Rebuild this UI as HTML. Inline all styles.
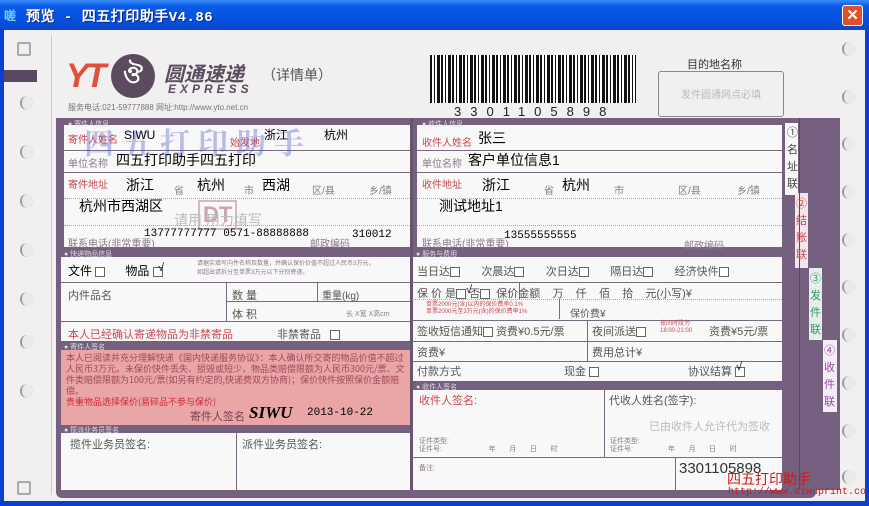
<!DOCTYPE html><html><head><meta charset="utf-8"><style>
*{margin:0;padding:0;box-sizing:border-box}
body{width:869px;height:506px;overflow:hidden;background:#0a3fd0;font-family:"Liberation Sans","Noto Sans CJK SC",sans-serif;position:relative}
.a{position:absolute}
#tb{left:0;top:0;width:869px;height:30px;background:linear-gradient(#3a8cf8,#0a5ae8 20%,#0550e0 70%,#0a46c8);}
#tt{left:26px;top:6px;color:#fff;font:bold 14px "Liberation Mono","WenQuanYi Zen Hei",monospace;letter-spacing:0.5px;text-shadow:1px 1px #0a2a80}
#cl{left:842px;top:5px;width:21px;height:21px;background:#e0502a;border:1px solid #fff;border-radius:3px;color:#fff;font:bold 15px/19px "Liberation Sans";text-align:center}
#pg{left:4px;top:30px;width:861px;height:471px;background:#f1efef;overflow:hidden}
.p{background:#76607f}
.w{background:#f9f8f8}
.t{position:absolute;white-space:nowrap;font-size:12px;color:#000}
.g{position:absolute;white-space:nowrap;font-size:10px;color:#8a7a86}
.r{color:#c8484e}
.hd{position:absolute;font-size:7px;color:#ddd;white-space:nowrap}
.ln{position:absolute;background:#7a6a80;height:1px}
.vl{position:absolute;background:#7a6a80;width:1px}
.dl{position:absolute;border-top:1px dotted #aaa;height:0}
.cb{display:inline-block;width:10px;height:10px;border:1px solid #666;vertical-align:middle;background:#fff}
.hole{position:absolute;width:14px;height:14px;border-radius:50%;border-left:2px solid #999;background:#eaeaea}
</style></head><body>
<div id="tb" class="a"></div>
<div class="a" style="left:4px;top:7px;width:16px;height:15px;color:#7cf;font:bold 12px 'WenQuanYi Zen Hei'">嗟</div>
<div id="tt" class="a">预览 - 四五打印助手V4.86</div>
<div id="cl" class="a">✕</div>
<div id="pg" class="a">
<div class="hole" style="left:13px;top:12px;border-radius:2px;border:2px solid #aaa;background:none"></div>
<div class="a" style="left:-4px;top:40px;width:37px;height:12px;background:#5a4860"></div>
<div class="hole" style="left:16px;top:66px"></div><div class="hole" style="left:16px;top:115px"></div><div class="hole" style="left:16px;top:164px"></div><div class="hole" style="left:16px;top:213px"></div><div class="hole" style="left:16px;top:262px"></div><div class="hole" style="left:16px;top:305px"></div><div class="hole" style="left:16px;top:354px"></div><div class="hole" style="left:13px;top:451px;border-radius:2px;border:2px solid #aaa;background:none"></div>
<div class="hole" style="left:838px;top:12px"></div><div class="hole" style="left:838px;top:60px"></div><div class="hole" style="left:838px;top:107px"></div><div class="hole" style="left:838px;top:155px"></div><div class="hole" style="left:838px;top:203px"></div><div class="hole" style="left:838px;top:250px"></div><div class="hole" style="left:838px;top:298px"></div><div class="hole" style="left:838px;top:346px"></div><div class="hole" style="left:838px;top:394px"></div><div class="hole" style="left:838px;top:440px"></div>
<div class="vl" style="left:47px;top:5px;height:460px;background:#ccc"></div>
<div class="a" style="left:62px;top:27px;font:italic 900 34px 'Liberation Sans';color:#e0503a;letter-spacing:-3px">YT</div>
<div class="a" style="left:107px;top:24px;width:44px;height:44px;border-radius:50%;background:#5c4a5e;color:#fff;font:bold 24px/44px 'Liberation Sans';text-align:center">ঔ</div>
<div class="a" style="left:160px;top:28px;font:italic bold 20px 'Noto Sans CJK SC';color:#5c4a5e">圆通速递</div>
<div class="a" style="left:164px;top:52px;font:italic bold 12px 'Liberation Sans';color:#5c4a5e;letter-spacing:4px">EXPRESS</div>
<div class="a" style="left:258px;top:35px;font:14px 'Noto Sans CJK SC';color:#555">（详情单）</div>
<div class="a" style="left:64px;top:72px;font:8px 'Liberation Sans','Noto Sans CJK SC';color:#777">服务电话:021-59777888 网址:http://www.yto.net.cn</div>
<div class="a" style="left:426px;top:25px;width:206px;height:48px;background:repeating-linear-gradient(90deg,#111 0 2px,#fff 2px 4px,#111 4px 5px,#fff 5px 7px,#111 7px 10px,#fff 10px 11px)"></div>
<div class="a" style="left:450px;top:74px;font:13px 'Liberation Sans';letter-spacing:9px;color:#222">3301105898</div>
<div class="a" style="left:683px;top:26px;font:11px 'Noto Sans CJK SC';color:#333">目的地名称</div>
<div class="a" style="left:654px;top:41px;width:126px;height:46px;border:1px solid #888;border-radius:3px;color:#bbb;font:10px/44px 'Noto Sans CJK SC';text-align:center">发件圆通网点必填</div>
<div class="a p" style="left:52px;top:88px;width:760px;height:380px;border-radius:0 0 6px 6px"></div>
<div class="a p" style="left:778px;top:88px;width:58px;height:372px"></div>
<div class="a w" style="left:781px;top:93px;width:13px;height:72px"></div>
<div class="a" style="left:791px;top:163px;width:13px;height:75px;background:#f3e6ea"></div>
<div class="a" style="left:805px;top:238px;width:13px;height:72px;background:#e6efec"></div>
<div class="a" style="left:819px;top:310px;width:14px;height:72px;background:#f3eef5"></div>
<div class="a" style="left:795px;top:88px;width:1px;height:372px;background:#5a4860"></div>
<div class="a" style="left:783px;top:94px;font:11px/17px 'Noto Sans CJK SC';color:#444;width:10px">①名址联</div>
<div class="a" style="left:792px;top:165px;font:11px/17px 'Noto Sans CJK SC';color:#c8484e;width:10px">②结账联</div>
<div class="a" style="left:806px;top:240px;font:11px/17px 'Noto Sans CJK SC';color:#2a9a70;width:10px">③发件联</div>
<div class="a" style="left:820px;top:312px;font:11px/17px 'Noto Sans CJK SC';color:#9a4aa0;width:10px">④收件联</div>
<div class="a w" style="left:60px;top:95px;width:346px;height:122px"></div>
<div class="a w" style="left:57px;top:227px;width:349px;height:84px"></div>
<div class="a" style="left:57px;top:320px;width:349px;height:75px;background:#eaa5a7"></div>
<div class="a w" style="left:57px;top:403px;width:349px;height:57px"></div>
<div class="a w" style="left:413px;top:95px;width:365px;height:122px"></div>
<div class="a w" style="left:408px;top:227px;width:370px;height:124px"></div>
<div class="a w" style="left:408px;top:360px;width:370px;height:100px"></div>
<div class="vl" style="left:406px;top:88px;height:372px;background:#6a5473;width:3px"></div>
<div class="hd" style="left:64px;top:89px">● 寄件人信息</div><div class="hd" style="left:418px;top:89px">● 收件人信息</div>
<div class="hd" style="left:60px;top:219px">● 快递物品信息</div><div class="hd" style="left:412px;top:219px">● 服务与费用</div>
<div class="hd" style="left:60px;top:312px">● 寄件人签名</div><div class="hd" style="left:412px;top:352px">● 收件人签名</div>
<div class="hd" style="left:60px;top:395px">● 揽派业务员签名</div>
<div class="ln" style="left:60px;top:120px;width:346px"></div>
<div class="ln" style="left:60px;top:142px;width:346px"></div>
<div class="dl" style="left:60px;top:168px;width:346px"></div>
<div class="dl" style="left:60px;top:195px;width:346px"></div>
<div class="g r" style="left:64px;top:101px">寄件人姓名</div><div class="t" style="left:120px;top:98px">SIWU</div>
<div class="g r" style="left:226px;top:104px">始发地</div><div class="t" style="left:260px;top:96px">浙江</div><div class="t" style="left:320px;top:96px">杭州</div>
<div class="g" style="left:64px;top:125px">单位名称</div><div class="t" style="left:112px;top:120px;font-size:14px">四五打印助手四五打印</div>
<div class="g r" style="left:64px;top:146px">寄件地址</div><div class="t" style="left:122px;top:145px;font-size:14px">浙江</div><div class="g" style="left:170px;top:152px">省</div><div class="t" style="left:193px;top:145px;font-size:14px">杭州</div><div class="g" style="left:240px;top:152px">市</div><div class="t" style="left:258px;top:145px;font-size:14px">西湖</div><div class="g" style="left:308px;top:152px">区/县</div><div class="g" style="left:365px;top:152px">乡/镇</div>
<div class="t" style="left:75px;top:166px;font-size:14px">杭州市西湖区</div>
<div class="a" style="left:194px;top:170px;color:#c0808a;font:bold 22px 'Liberation Sans';border:2px solid #c8a0a8;padding:0 3px;opacity:.7">DT</div>
<div class="g" style="left:170px;top:180px;font-size:14px;color:#bbb">请用       用力填写</div>
<div class="g" style="left:64px;top:205px">联系电话(非常重要)</div><div class="t" style="left:140px;top:198px;font:11px 'Liberation Mono'">13777777777  0571-88888888</div><div class="g" style="left:306px;top:205px">邮政编码</div><div class="t" style="left:348px;top:199px;font:11px 'Liberation Mono'">310012</div>
<div class="a" style="left:80px;top:89px;font:bold 30px 'Noto Serif CJK SC';color:rgba(60,80,200,.35);letter-spacing:8px">四五打印助手</div>
<div class="ln" style="left:57px;top:252px;width:349px"></div>
<div class="ln" style="left:57px;top:291px;width:349px"></div>
<div class="ln" style="left:222px;top:271px;width:184px"></div>
<div class="vl" style="left:222px;top:252px;height:39px"></div><div class="vl" style="left:313px;top:252px;height:19px"></div>
<div class="t" style="left:64px;top:232px">文件 <span class="cb"></span>&nbsp;&nbsp;&nbsp;&nbsp;&nbsp;&nbsp;物品 <span class="cb"></span></div>
<div class="g" style="left:193px;top:230px;font-size:6px;line-height:9px">请据实填写内件名称及数量，并确认保价价值不超过人民币3万元，<br>如超出请拆分至单票3万元以下分别寄递。</div>
<div class="g" style="left:64px;top:257px;font-size:11px;color:#555">内件品名</div>
<div class="g" style="left:228px;top:257px;font-size:11px;color:#555">数 量</div><div class="g" style="left:318px;top:257px;font-size:10px;color:#555">重量(kg)</div>
<div class="g" style="left:228px;top:276px;font-size:11px;color:#555">体 积</div><div class="g" style="left:342px;top:279px;font-size:7px">长 X宽 X高cm</div>
<div class="t r" style="left:64px;top:296px;font-size:11px">本人已经确认寄递物品为非禁寄品</div>
<div class="g" style="left:273px;top:296px;font-size:11px;color:#555">非禁寄品 &nbsp;&nbsp;<span class="cb"></span></div>
<div class="a" style="left:62px;top:322px;width:340px;font:9px/11px 'Noto Sans CJK SC';color:#a04858">本人已阅读并充分理解快递《国内快递服务协议》：本人确认所交寄的物品价值不超过人民币3万元。未保价快件丢失、损毁或短少，物品类赔偿限额为人民币300元/票、文件类赔偿限额为100元/票(如另有约定的,快递费双方协商)；保价快件按照保价金额赔偿。<br><span style="color:#d02838">贵重物品选择保价(易碎品不参与保价)</span></div>
<div class="g" style="left:186px;top:378px;font-size:11px;color:#7a4050">寄件人签名</div>
<div class="t" style="left:245px;top:373px;font:italic bold 17px 'Liberation Serif'">SIWU</div>
<div class="t" style="left:303px;top:377px;font:11px 'Liberation Mono'">2013-10-22</div>
<div class="vl" style="left:232px;top:403px;height:57px"></div>
<div class="g" style="left:66px;top:406px;font-size:11px;color:#555">揽件业务员签名:</div><div class="g" style="left:238px;top:406px;font-size:11px;color:#555">派件业务员签名:</div>
<div class="ln" style="left:413px;top:120px;width:365px"></div>
<div class="ln" style="left:413px;top:142px;width:365px"></div>
<div class="dl" style="left:413px;top:168px;width:365px"></div>
<div class="dl" style="left:413px;top:195px;width:365px"></div>
<div class="g r" style="left:418px;top:104px">收件人姓名</div><div class="t" style="left:474px;top:98px;font-size:14px">张三</div>
<div class="g" style="left:418px;top:125px">单位名称</div><div class="t" style="left:464px;top:120px;font-size:14px">客户单位信息1</div>
<div class="g r" style="left:418px;top:146px">收件地址</div><div class="t" style="left:478px;top:145px;font-size:14px">浙江</div><div class="g" style="left:540px;top:152px">省</div><div class="t" style="left:558px;top:145px;font-size:14px">杭州</div><div class="g" style="left:610px;top:152px">市</div><div class="g" style="left:674px;top:152px">区/县</div><div class="g" style="left:733px;top:152px">乡/镇</div>
<div class="t" style="left:435px;top:166px;font-size:14px">测试地址1</div>
<div class="g" style="left:418px;top:205px">联系电话(非常重要)</div><div class="t" style="left:500px;top:200px;font:11px 'Liberation Mono'">13555555555</div><div class="g" style="left:680px;top:207px">邮政编码</div>
<div class="ln" style="left:408px;top:252px;width:370px"></div>
<div class="ln" style="left:408px;top:290px;width:370px"></div>
<div class="ln" style="left:408px;top:311px;width:370px"></div>
<div class="ln" style="left:408px;top:331px;width:370px"></div>
<div class="dl" style="left:408px;top:269px;width:370px"></div>
<div class="vl" style="left:515px;top:252px;height:17px"></div><div class="vl" style="left:555px;top:269px;height:20px"></div><div class="vl" style="left:583px;top:290px;height:41px"></div>
<div class="g" style="left:413px;top:233px;font-size:11px;color:#555">当日达<span class="cb"></span>&nbsp;&nbsp;&nbsp;&nbsp;&nbsp;&nbsp;&nbsp;次晨达<span class="cb"></span>&nbsp;&nbsp;&nbsp;&nbsp;&nbsp;&nbsp;&nbsp;次日达<span class="cb"></span>&nbsp;&nbsp;&nbsp;&nbsp;&nbsp;&nbsp;&nbsp;隔日达<span class="cb"></span>&nbsp;&nbsp;&nbsp;&nbsp;&nbsp;&nbsp;&nbsp;经济快件<span class="cb"></span></div>
<div class="g" style="left:413px;top:255px;font-size:11px;color:#555">保 价 是<span class="cb"></span> 否<span class="cb"></span>&nbsp; 保价金额 &nbsp;&nbsp;&nbsp;万 &nbsp;&nbsp;&nbsp;仟 &nbsp;&nbsp;&nbsp;佰 &nbsp;&nbsp;&nbsp;拾 &nbsp;&nbsp;&nbsp;元(小写)¥</div>
<div class="g r" style="left:422px;top:272px;font-size:6px;line-height:7px">单票2000元(含)以内的保价费率0.1%<br>单票2000元至3万元(含)的保价费率1%</div>
<div class="g" style="left:566px;top:275px;color:#555">保价费¥</div>
<div class="g" style="left:413px;top:293px;font-size:11px;color:#555">签收短信通知<span class="cb"></span> 资费¥0.5元/票</div>
<div class="g" style="left:588px;top:293px;font-size:11px;color:#555">夜间派送<span class="cb"></span></div><div class="g r" style="left:656px;top:291px;font-size:6px;line-height:7px">夜间时段为<br>18:00-21:00</div><div class="g" style="left:705px;top:293px;font-size:11px;color:#555">资费¥5元/票</div>
<div class="g" style="left:413px;top:314px;font-size:11px;color:#555">资费¥</div><div class="g" style="left:588px;top:314px;font-size:11px;color:#555">费用总计¥</div>
<div class="g" style="left:413px;top:333px;font-size:11px;color:#555">付款方式</div><div class="g" style="left:560px;top:333px;font-size:11px;color:#555">现金 <span class="cb"></span></div><div class="g" style="left:684px;top:333px;font-size:11px;color:#555">协议结算 <span class="cb"></span></div>
<div class="t" style="left:462px;top:254px;font-size:11px">√</div><div class="t" style="left:154px;top:232px;font-size:11px">√</div><div class="t" style="left:732px;top:331px;font-size:11px">√</div>
<div class="vl" style="left:600px;top:360px;height:67px"></div>
<div class="ln" style="left:408px;top:427px;width:370px"></div>
<div class="vl" style="left:671px;top:427px;height:33px"></div>
<div class="g r" style="left:415px;top:362px;font-size:11px">收件人签名:</div>
<div class="g" style="left:605px;top:362px;font-size:11px;color:#555">代收人姓名(签字):</div>
<div class="g" style="left:645px;top:388px;font-size:11px;color:#bbb">已由收件人允许代为签收</div>
<div class="g" style="left:415px;top:408px;font-size:7px;line-height:8px">证件类型:<br>证件号:&nbsp;&nbsp;&nbsp;&nbsp;&nbsp;&nbsp;&nbsp;&nbsp;&nbsp;&nbsp;&nbsp;&nbsp;&nbsp;&nbsp;&nbsp;&nbsp;&nbsp;&nbsp;&nbsp;&nbsp;&nbsp;&nbsp;&nbsp;&nbsp;年 &nbsp;&nbsp;&nbsp;&nbsp;&nbsp;&nbsp;月 &nbsp;&nbsp;&nbsp;&nbsp;&nbsp;&nbsp;日 &nbsp;&nbsp;&nbsp;&nbsp;&nbsp;&nbsp;时</div>
<div class="g" style="left:606px;top:408px;font-size:7px;line-height:8px">证件类型:<br>证件号:&nbsp;&nbsp;&nbsp;&nbsp;&nbsp;&nbsp;&nbsp;&nbsp;&nbsp;&nbsp;&nbsp;&nbsp;&nbsp;&nbsp;&nbsp;&nbsp;&nbsp;&nbsp;年 &nbsp;&nbsp;&nbsp;&nbsp;&nbsp;&nbsp;月 &nbsp;&nbsp;&nbsp;&nbsp;&nbsp;&nbsp;日 &nbsp;&nbsp;&nbsp;&nbsp;&nbsp;&nbsp;时</div>
<div class="g" style="left:415px;top:433px;font-size:7px">备注:</div>
<div class="t" style="left:675px;top:430px;font:15px 'Liberation Sans';color:#333">3301105898</div>
</div>
<div class="a" style="left:727px;top:469px;font:14px 'Noto Sans CJK SC';color:#d01818">四五打印助手</div>
<div class="a" style="left:728px;top:487px;font:10px 'Liberation Mono';color:#d01818">http://www.siwuprint.co</div>
</body></html>
